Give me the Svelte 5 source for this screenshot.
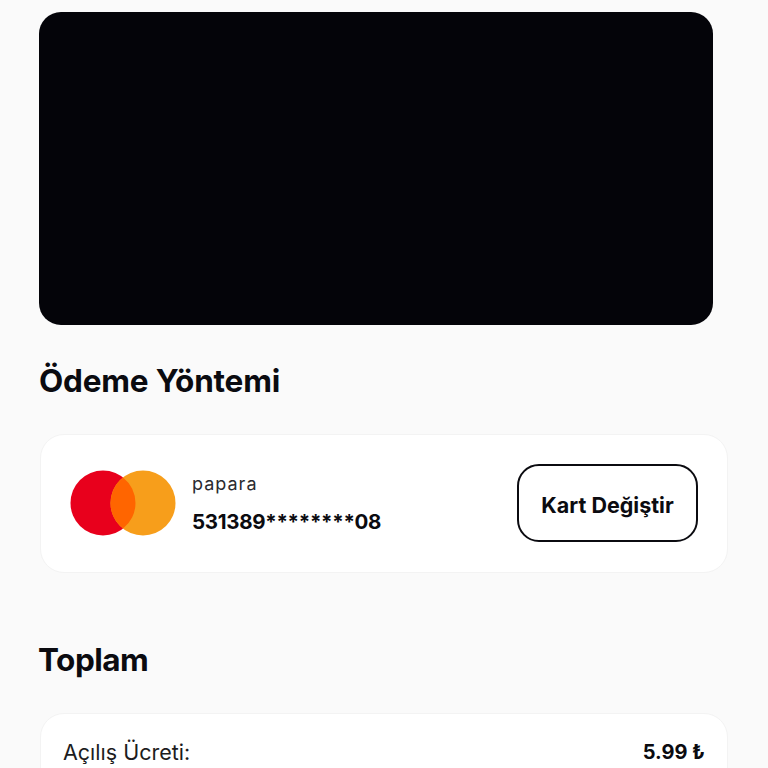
<script lang="ts">
	const totals = [{ label: 'Açılış Ücreti:', value: '5.99 ₺' }];
</script>

<div class="page">
	<div class="video"></div>

	<h2 class="pay-title">Ödeme Yöntemi</h2>

	<section class="card pay-card">
		<svg class="mc" width="106" height="66" viewBox="0 0 106 66" aria-hidden="true">
			<circle cx="33" cy="33" r="32.5" fill="#e8001c" />
			<circle cx="73" cy="33" r="32.5" fill="#f79e1b" />
			<path d="M53 7.4a32.5 32.5 0 0 1 0 51.2a32.5 32.5 0 0 1 0-51.2z" fill="#ff6500" />
		</svg>
		<div class="pay-info">
			<span class="pay-name">papara</span>
			<span class="pay-number">531389********08</span>
		</div>
		<button class="change">Kart Değiştir</button>
	</section>

	<h2 class="total-title">Toplam</h2>

	<section class="card total-card">
		{#each totals as row}
			<div class="row">
				<span class="row-label">{row.label}</span>
				<span class="row-value">{row.value}</span>
			</div>
		{/each}
	</section>
</div>

<style>
	:global(body) {
		background: #fafafa;
		overflow: hidden;
	}

	.page {
		height: 768px;
		overflow: hidden;
		box-sizing: border-box;
		padding: 12px 40px 0 40px;
		font-family: Inter, sans-serif;
		color: #0b0b10;
	}

	.video {
		width: 674px;
		height: 313px;
		margin-left: -1px;
		background: #040409;
		border-radius: 22px;
	}

	h2 {
		margin: 0 0 0 -1px;
		font-size: 31.5px;
		line-height: 40px;
		font-weight: 700;
		letter-spacing: -0.2px;
	}

	.pay-title {
		margin-top: 36px;
	}

	.total-title {
		margin-top: 67px;
		margin-left: -2px;
		letter-spacing: -0.5px;
	}

	.card {
		width: 688px;
		box-sizing: border-box;
		background: #fff;
		border: 1px solid #f3f3f3;
		border-radius: 24px;
	}

	.pay-card {
		height: 139px;
		margin-top: 33px;
		display: flex;
		align-items: center;
		padding: 0 29px 2px 29px;
	}

	.mc {
		flex: none;
	}

	.pay-info {
		display: flex;
		flex-direction: column;
		gap: 15px;
		margin-left: 16px;
		margin-top: 3px;
		flex: 1;
	}

	.pay-name {
		font-size: 18px;
		line-height: 20px;
		letter-spacing: 1px;
		color: #2a2a2e;
	}

	.pay-number {
		font-size: 20.5px;
		line-height: 26px;
		font-weight: 700;
		letter-spacing: -0.3px;
	}

	.change {
		width: 181px;
		height: 78px;
		background: #fff;
		border: 2px solid #0b0b10;
		border-radius: 22px;
		padding: 4px 0 0;
		font-family: inherit;
		font-size: 21.5px;
		font-weight: 700;
		color: #0b0b10;
	}

	.total-card {
		margin-top: 33px;
		padding: 24px 22px;
		height: 120px;
	}

	.row {
		display: flex;
		justify-content: space-between;
		align-items: center;
		line-height: 28px;
	}

	.row-label {
		font-size: 21.5px;
		color: #1c1c20;
	}

	.row-value {
		font-size: 20px;
		font-weight: 700;
	}
</style>
